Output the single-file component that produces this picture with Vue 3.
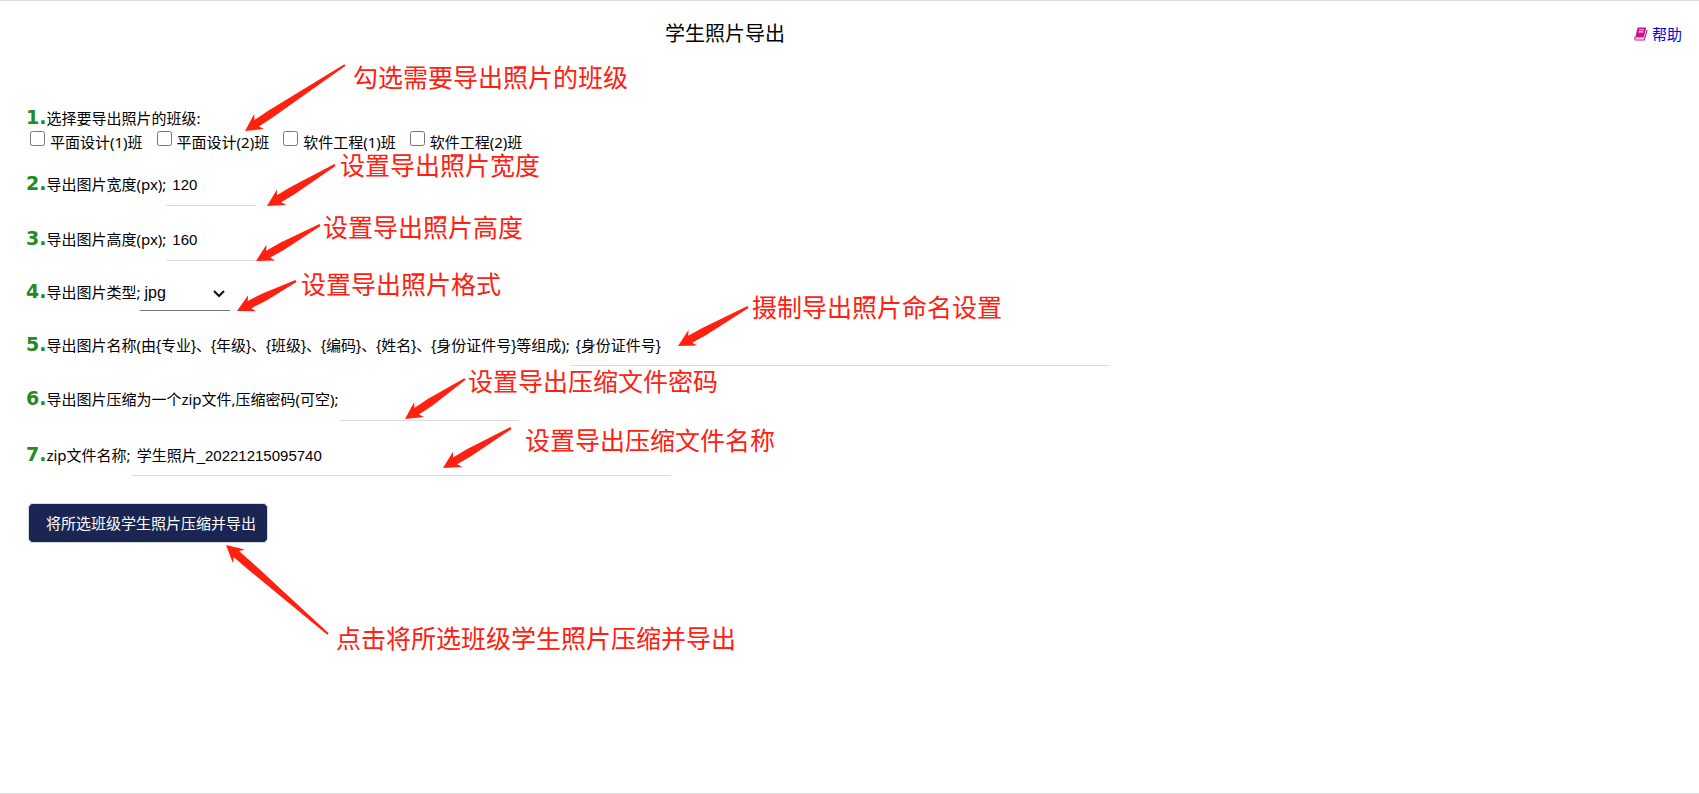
<script setup>
import { ref } from 'vue'

const classes = ref([
  { id: 'c1', name: '平面设计(1)班', checked: false },
  { id: 'c2', name: '平面设计(2)班', checked: false },
  { id: 'c3', name: '软件工程(1)班', checked: false },
  { id: 'c4', name: '软件工程(2)班', checked: false },
])
const tokens = ['{专业}', '{年级}', '{班级}', '{编码}', '{姓名}', '{身份证件号}']
const width = ref('120')
const height = ref('160')
const type = ref('jpg')
const naming = ref('{身份证件号}')
const password = ref('')
const zipName = ref('学生照片_20221215095740')

const notes = [
  { text: '勾选需要导出照片的班级', x: 353, y: 62, tail: [345, 65], tip: [245, 131] },
  { text: '设置导出照片宽度', x: 340, y: 150, tail: [335, 165], tip: [267, 206] },
  { text: '设置导出照片高度', x: 323, y: 212, tail: [320, 225], tip: [256, 261] },
  { text: '设置导出照片格式', x: 301, y: 269, tail: [296, 281], tip: [237, 311] },
  { text: '摄制导出照片命名设置', x: 752, y: 292, tail: [748, 307], tip: [678, 346] },
  { text: '设置导出压缩文件密码', x: 468, y: 366, tail: [465, 379], tip: [405, 419] },
  { text: '设置导出压缩文件名称', x: 525, y: 425, tail: [511, 428], tip: [443, 468] },
  { text: '点击将所选班级学生照片压缩并导出', x: 336, y: 623, tail: [328, 634], tip: [226, 545] },
]

// Arrow outline as [distance from tip, sideways offset]
function arrow({ tail, tip }) {
  const dx = tail[0] - tip[0]
  const dy = tail[1] - tip[1]
  const len = Math.hypot(dx, dy)
  const ux = dx / len
  const uy = dy / len
  const outline = [[0, 0], [17, -9], [14, -4], [30, -4], [len, -1], [len, 1], [30, 4], [14, 4], [17, 9]]
  return outline
    .map(([a, b]) => `${(tip[0] + a * ux - b * uy).toFixed(1)},${(tip[1] + a * uy + b * ux).toFixed(1)}`)
    .join(' ')
}
</script>

<template>
  <main class="page">
    <header class="head">
      <h1>学生照片导出</h1>
      <a class="help" href="#help">
        <svg width="14" height="14" viewBox="0 0 14 14" aria-hidden="true">
          <path d="M3.6 0.5h8.6L9.8 10.5H1.2z" fill="#c71585" />
          <path d="M1.2 10c-.8 1.4-.4 3 .8 3h8.2l2.9-10" fill="none" stroke="#c71585" stroke-width="1.1" />
          <path d="M1.8 11.6h8.2" stroke="#f3c3df" stroke-width="1" />
          <path d="M5 2.8h5M4.4 4.9h5" stroke="#f3d3e3" stroke-width="1.1" />
        </svg>
        <span>帮助</span>
      </a>
    </header>

    <form class="form" @submit.prevent>
      <fieldset class="classes">
        <legend><b>1.</b>选择要导出照片的班级:</legend>
        <div class="checks">
          <label v-for="c in classes" :key="c.id" :for="c.id">
            <input :id="c.id" v-model="c.checked" type="checkbox" />
            <span>{{ c.name }}</span>
          </label>
        </div>
      </fieldset>

      <div class="row">
        <label for="width"><b>2.</b>导出图片宽度(px);</label>
        <input id="width" v-model="width" class="field small" type="text" />
      </div>
      <div class="row">
        <label for="height"><b>3.</b>导出图片高度(px);</label>
        <input id="height" v-model="height" class="field small" type="text" />
      </div>
      <div class="row">
        <label for="type"><b>4.</b>导出图片类型;</label>
        <span class="picker">
          <select id="type" v-model="type">
            <option>jpg</option>
            <option>png</option>
          </select>
          <svg width="14" height="10" viewBox="0 0 14 10" aria-hidden="true">
            <path d="M2 2l5 5 5-5" fill="none" stroke="#111" stroke-width="2" />
          </svg>
        </span>
      </div>
      <div class="row">
        <label for="naming"><b>5.</b>导出图片名称(由<template v-for="(t, i) in tokens" :key="t"><template v-if="i">、</template><span class="token">{{ t }}</span></template>等组成);</label>
        <input id="naming" v-model="naming" class="field large" type="text" />
      </div>
      <div class="row">
        <label for="password"><b>6.</b>导出图片压缩为一个zip文件,压缩密码(可空);</label>
        <input id="password" v-model="password" class="field medium" type="text" />
      </div>
      <div class="row">
        <label for="zip"><b>7.</b>zip文件名称;</label>
        <input id="zip" v-model="zipName" class="field large" type="text" />
      </div>

      <button type="submit">将所选班级学生照片压缩并导出</button>
    </form>

    <div class="notes">
      <svg class="arrows" aria-hidden="true">
        <polygon v-for="n in notes" :key="n.text" :points="arrow(n)" />
      </svg>
      <span v-for="n in notes" :key="n.text" class="note" :style="{ left: n.x + 'px', top: n.y + 'px' }">{{ n.text }}</span>
    </div>
  </main>
</template>

<style>
body {
  background: #fff;
}
</style>

<style scoped>
* {
  box-sizing: border-box;
}
.page {
  position: relative;
  min-height: 100vh;
  border-top: 1px solid #dfdfdf;
  border-bottom: 1px solid #ccd6dd;
  color: #000;
  font-family: "Noto Sans", "Noto Sans CJK SC", sans-serif;
  font-size: 15px;
  line-height: 22px;
}
.head {
  display: grid;
  grid-template-columns: 1fr 232px;
  align-items: center;
  height: 66px;
  padding-right: 17px;
}
h1 {
  margin: 0;
  font-size: 20px;
  font-weight: 400;
  line-height: 30px;
  text-align: center;
}
.help {
  display: flex;
  align-items: center;
  justify-self: end;
  gap: 4px;
  color: #0000ee;
  text-decoration: none;
}
.form {
  display: flex;
  flex-direction: column;
  align-items: flex-start;
  gap: 17px;
  padding: 39px 26px;
}
.classes {
  margin: 0;
  padding: 0;
  border: 0;
}
legend {
  padding: 0;
  line-height: 25px;
}
b {
  color: #228b22;
  font-family: "DejaVu Sans", sans-serif;
  font-size: 19px;
  line-height: 22px;
}
.checks {
  display: flex;
  gap: 14px;
  height: 20px;
  padding-left: 4px;
}
.checks label {
  display: flex;
  align-items: flex-start;
  gap: 5px;
}
.checks input {
  width: 15px;
  height: 15px;
  margin: 0;
}
.row {
  display: flex;
  align-items: baseline;
}
.row label {
  flex: none;
}
.token {
  font-family: "Liberation Sans", "Noto Sans CJK SC", sans-serif;
}
.field,
select {
  border: 0;
  border-bottom: 1px solid #dcdcdc;
  border-radius: 0;
  background: transparent;
  color: #000;
  font: 15px "Liberation Sans", "Noto Sans CJK SC", sans-serif;
  outline: 0;
}
.field {
  height: 38px;
  padding: 0 6px 4px;
}
.small {
  width: 90px;
}
.medium {
  width: 180px;
}
.large {
  width: 540px;
}
.picker {
  position: relative;
}
select {
  width: 90px;
  height: 33px;
  padding: 0 4px 3px;
  border-color: #767676;
  appearance: none;
  font-size: 16px;
}
.picker svg {
  position: absolute;
  top: 11px;
  right: 4px;
  pointer-events: none;
}
button {
  height: 40px;
  margin: 10px 2px;
  padding: 0 11px 0 17px;
  border: 1px solid #d5dade;
  border-radius: 5px;
  background: #1b2551;
  color: #fff;
  font: inherit;
}
.notes {
  position: absolute;
  inset: -1px 0 0;
  overflow: hidden;
  pointer-events: none;
}
.arrows {
  width: 100%;
  height: 100%;
  fill: #ff2010;
}
.note {
  position: absolute;
  color: #ff2010;
  font-size: 25px;
  line-height: 30px;
  white-space: nowrap;
}
</style>
